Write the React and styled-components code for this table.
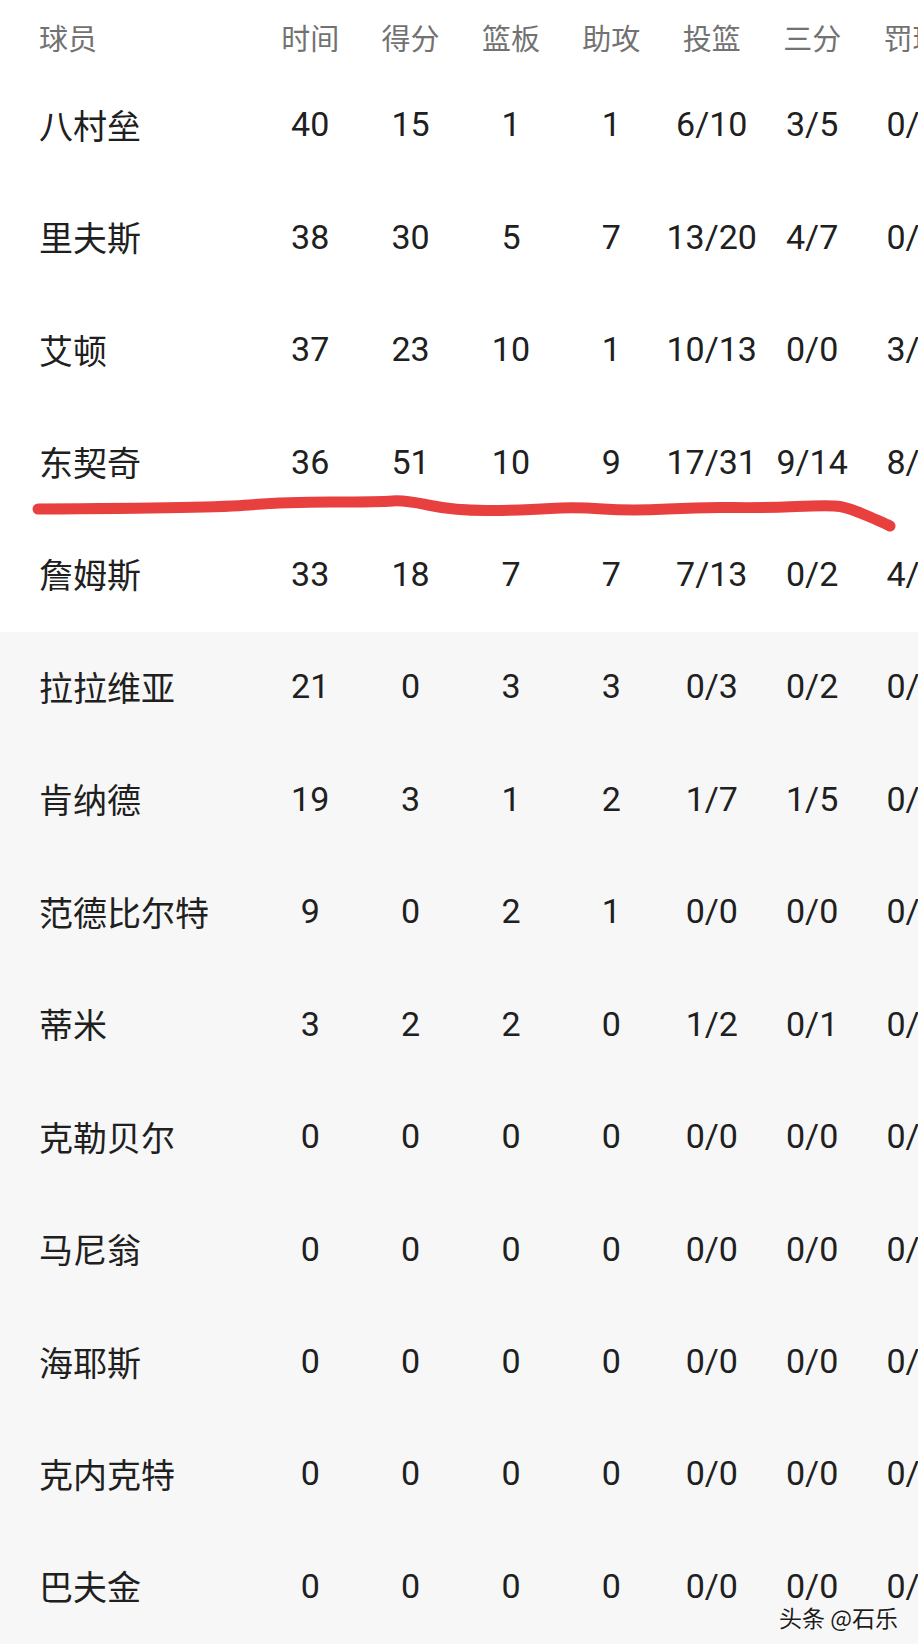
import React from 'react';
import styled, { createGlobalStyle } from 'styled-components';

const GlobalStyle = createGlobalStyle`
  html, body {
    margin: 0;
    padding: 0;
    background: #ffffff;
  }
  body {
    overflow: hidden;
  }
`;

const Page = styled.div`
  position: relative;
  width: 918px;
  height: 1648px;
  overflow: hidden;
  background: #ffffff;
  font-family: Roboto, 'Noto Sans CJK SC', sans-serif;
  color: #202020;
`;

const cols = '260px repeat(8, 100.4px)';

const HeaderRow = styled.div`
  display: grid;
  grid-template-columns: ${cols};
  align-items: center;
  height: 70px;
  padding-top: 4px;
  box-sizing: border-box;
  font-size: 29px;
  color: #727272;
  white-space: nowrap;
`;

const Row = styled.div`
  display: grid;
  grid-template-columns: ${cols};
  align-items: center;
  height: 112.45px;
  padding-bottom: 4px;
  box-sizing: border-box;
  font-size: 34px;
  white-space: nowrap;
  background: ${(p) => (p.$bench ? '#f7f7f7' : '#ffffff')};
`;

const NameCell = styled.div`
  padding-left: 39px;
  text-align: left;
`;

const StatCell = styled.div`
  text-align: center;
`;

const Scribble = styled.svg`
  position: absolute;
  left: 0;
  top: 480px;
  width: 918px;
  height: 60px;
  pointer-events: none;
`;

const Watermark = styled.div`
  position: absolute;
  right: 20px;
  bottom: 14px;
  font-family: 'Noto Sans CJK SC', sans-serif;
  font-size: 23px;
  color: #1c1c1c;
  text-shadow: 0 0 2px #ffffff, 0 0 2px #ffffff;
`;

const headers = ['球员', '时间', '得分', '篮板', '助攻', '投篮', '三分', '罚球', '抢断'];

const players = [
  ['八村垒', '40', '15', '1', '1', '6/10', '3/5', '0/0'],
  ['里夫斯', '38', '30', '5', '7', '13/20', '4/7', '0/0'],
  ['艾顿', '37', '23', '10', '1', '10/13', '0/0', '3/4'],
  ['东契奇', '36', '51', '10', '9', '17/31', '9/14', '8/9'],
  ['詹姆斯', '33', '18', '7', '7', '7/13', '0/2', '4/6'],
  ['拉拉维亚', '21', '0', '3', '3', '0/3', '0/2', '0/0'],
  ['肯纳德', '19', '3', '1', '2', '1/7', '1/5', '0/0'],
  ['范德比尔特', '9', '0', '2', '1', '0/0', '0/0', '0/0'],
  ['蒂米', '3', '2', '2', '0', '1/2', '0/1', '0/0'],
  ['克勒贝尔', '0', '0', '0', '0', '0/0', '0/0', '0/0'],
  ['马尼翁', '0', '0', '0', '0', '0/0', '0/0', '0/0'],
  ['海耶斯', '0', '0', '0', '0', '0/0', '0/0', '0/0'],
  ['克内克特', '0', '0', '0', '0', '0/0', '0/0', '0/0'],
  ['巴夫金', '0', '0', '0', '0', '0/0', '0/0', '0/0'],
];

// hand drawn underline under 东契奇, points relative to the svg box
const strokePts = [
  [38, 29], [217, 28], [281, 22], [381, 22], [404, 20], [457, 31],
  [527, 30], [574, 27], [632, 31], [703, 27], [761, 28], [831, 25],
  [849, 28], [884, 43], [890, 46],
];

function smoothPath(pts) {
  let d = `M${pts[0][0]} ${pts[0][1]}`;
  for (let i = 1; i < pts.length - 1; i++) {
    const mx = (pts[i][0] + pts[i + 1][0]) / 2;
    const my = (pts[i][1] + pts[i + 1][1]) / 2;
    d += ` Q${pts[i][0]} ${pts[i][1]} ${mx} ${my}`;
  }
  const last = pts[pts.length - 1];
  d += ` L${last[0]} ${last[1]}`;
  return d;
}

function App() {
  return (
    <Page>
      <GlobalStyle />
      <HeaderRow>
        {headers.map((h, i) =>
          i === 0 ? <NameCell key={h}>{h}</NameCell> : <StatCell key={h}>{h}</StatCell>
        )}
      </HeaderRow>
      {players.map((p, idx) => (
        <Row key={p[0]} $bench={idx >= 5}>
          <NameCell>{p[0]}</NameCell>
          {p.slice(1).map((v, j) => (
            <StatCell key={j}>{v}</StatCell>
          ))}
          <StatCell>0</StatCell>
        </Row>
      ))}
      <Scribble viewBox="0 0 918 60">
        <path
          d={smoothPath(strokePts)}
          fill="none"
          stroke="#e8403f"
          strokeWidth="11"
          strokeLinecap="round"
          strokeLinejoin="round"
        />
      </Scribble>
      <Watermark>头条 @石乐</Watermark>
    </Page>
  );
}

export default App;
